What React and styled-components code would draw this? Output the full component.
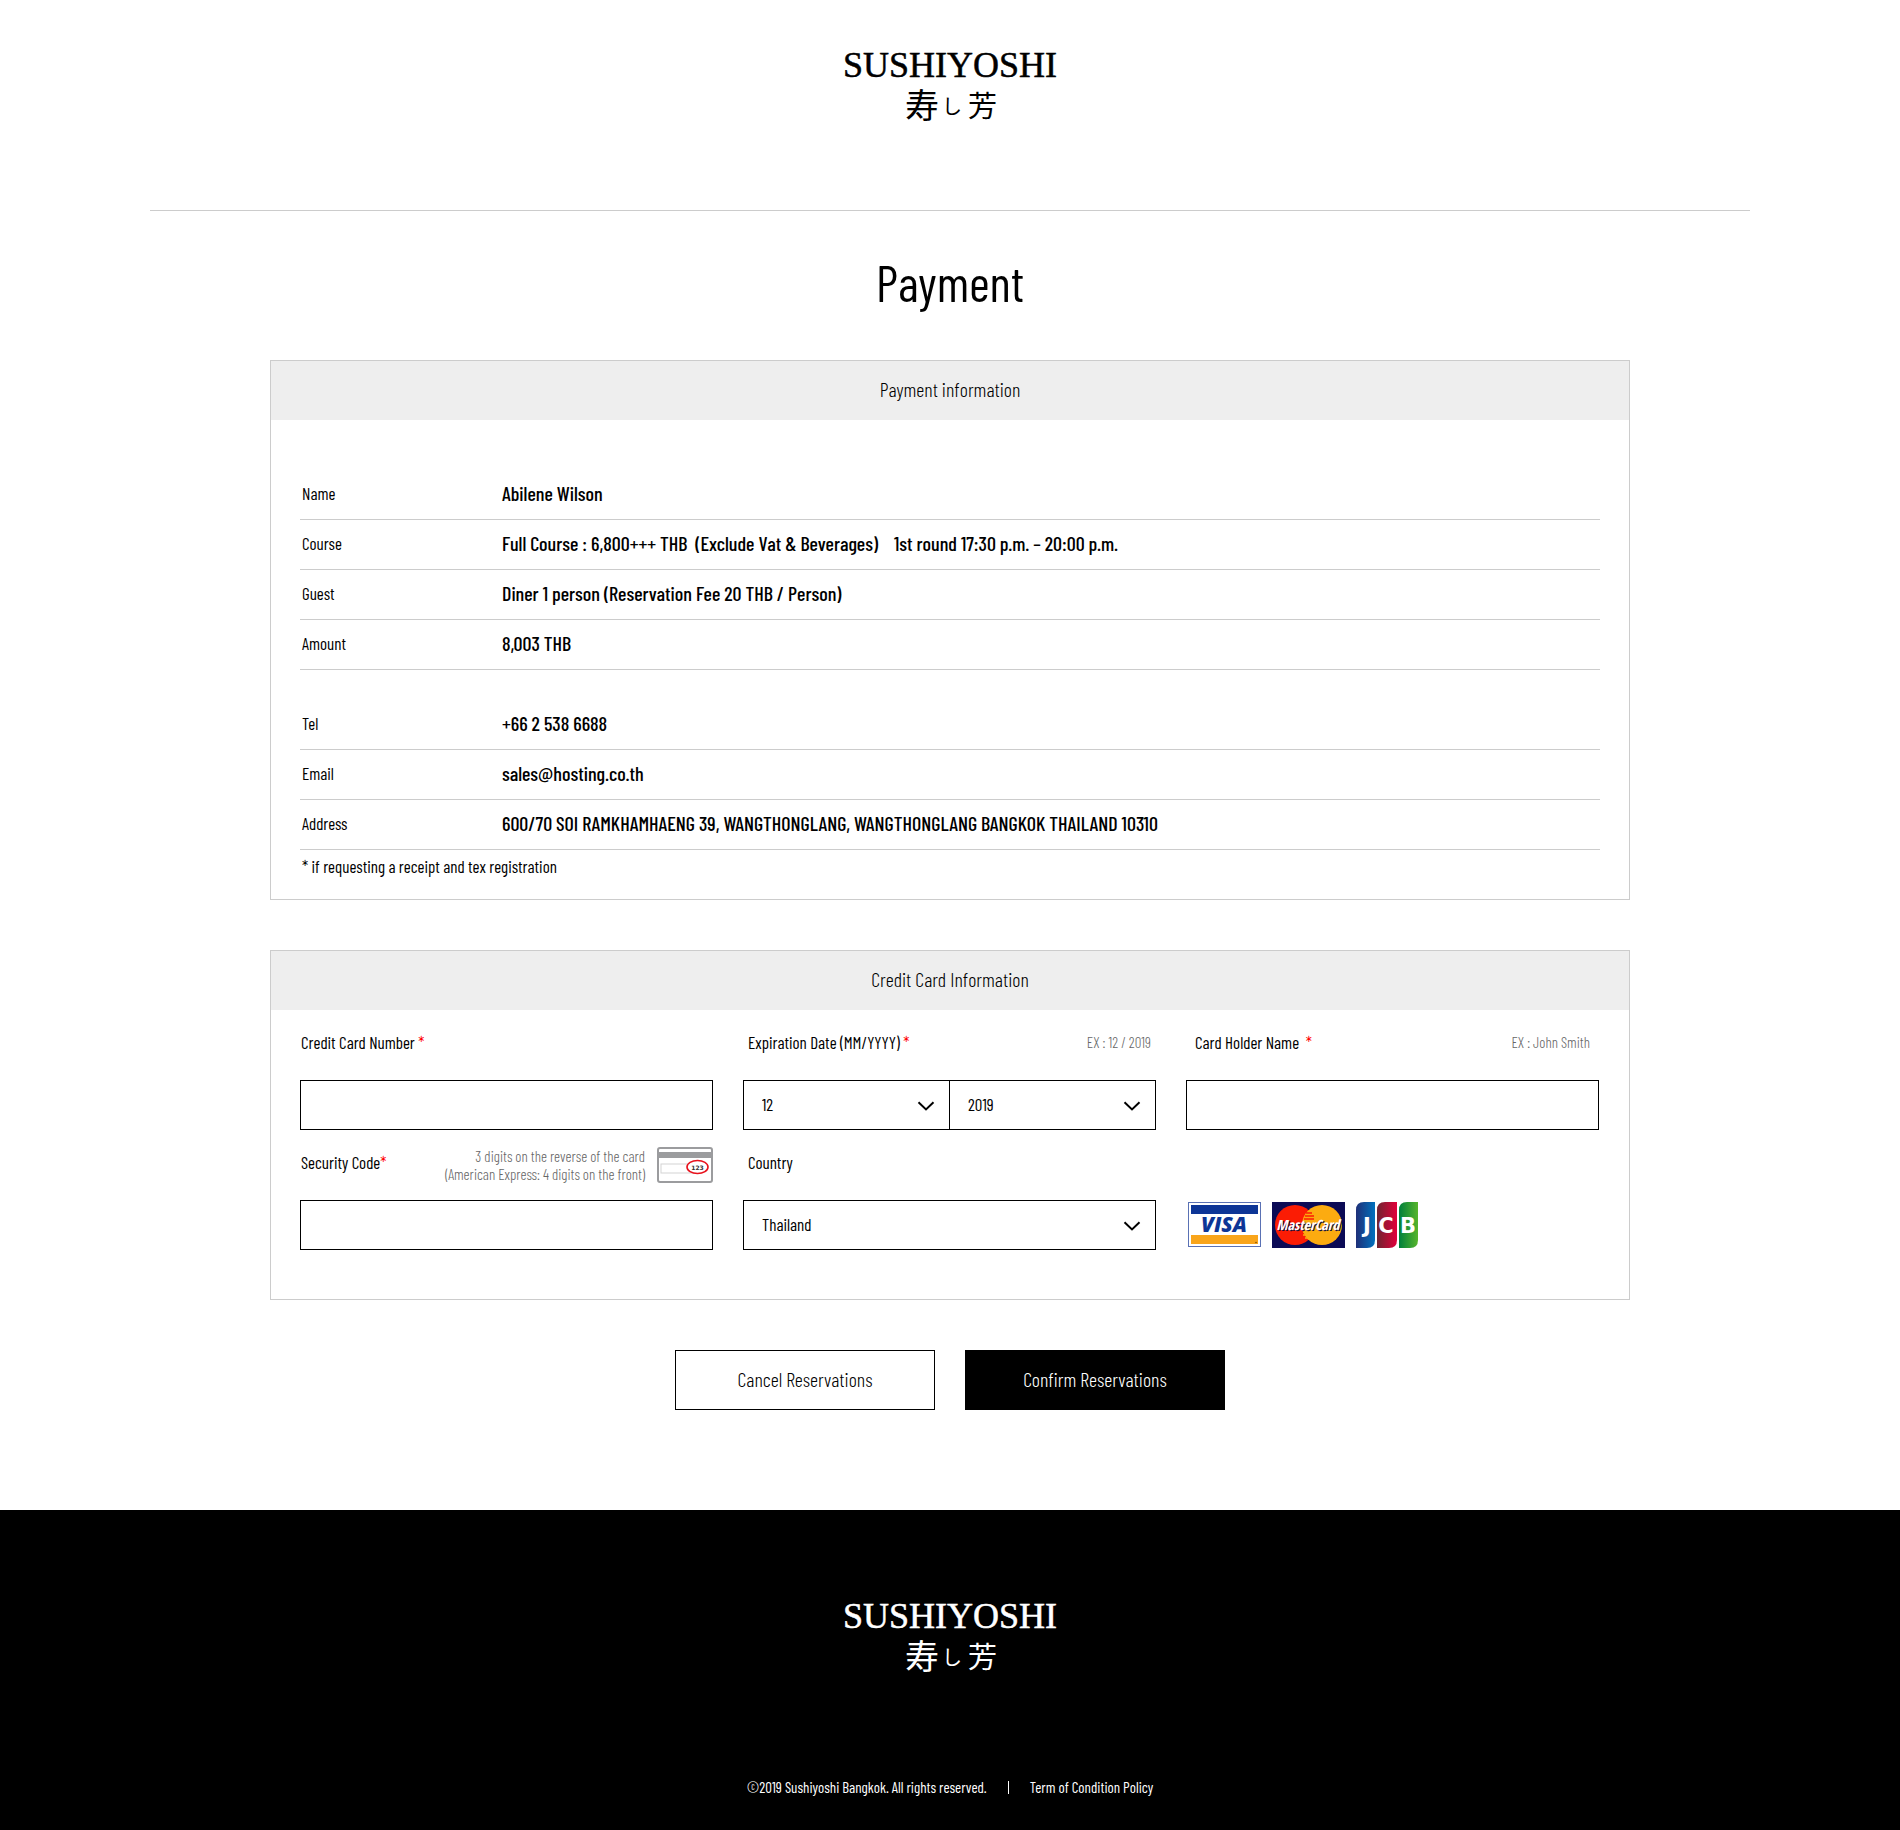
import React from 'react';
import styled, { createGlobalStyle } from 'styled-components';

const customer = [
    { label: 'Name', value: 'Abilene Wilson' },
    { label: 'Course', value: 'Full Course : 6,800+++ THB\u00a0 (Exclude Vat & Beverages)\u00a0\u00a0\u00a0 1st round 17:30 p.m. – 20:00 p.m.' },
    { label: 'Guest', value: 'Diner 1 person (Reservation Fee 20 THB / Person)' },
    { label: 'Amount', value: '8,003 THB' }
];

const contact = [
    { label: 'Tel', value: '+66 2 538 6688' },
    { label: 'Email', value: 'sales@hosting.co.th' },
    { label: 'Address', value: '600/70 SOI RAMKHAMHAENG 39, WANGTHONGLANG, WANGTHONGLANG BANGKOK THAILAND 10310' }
];

const months = ['01', '02', '03', '04', '05', '06', '07', '08', '09', '10', '11', '12'];
const years = ['2019', '2020', '2021', '2022', '2023', '2024'];
const countries = ['Thailand', 'Japan', 'Singapore', 'Malaysia'];

function Logo() {
    return (
        <LogoSvg viewBox="0 0 240 80" width="240" height="80" role="img" aria-label="Sushiyoshi">
            <LogoName x="120" y="32" textAnchor="middle">SUSHIYOSHI</LogoName>
            <LogoKanji x="75" y="73" fontSize="34">寿</LogoKanji>
            <LogoKanji x="112" y="69" fontSize="20">し</LogoKanji>
            <LogoKanji x="138" y="72" fontSize="29">芳</LogoKanji>
        </LogoSvg>
    );
}

function InfoList({ rows }) {
    return (
        <List>
            {rows.map(row => (
                <Row key={row.label}>
                    <Term>{row.label}</Term>
                    <Value>{row.value}</Value>
                </Row>
            ))}
        </List>
    );
}

function Dropdown({ options, ...rest }) {
    return (
        <SelectWrap>
            <Select {...rest}>
                {options.map(option => <option key={option}>{option}</option>)}
            </Select>
            <Chevron viewBox="0 0 18 10" width="18" height="10" aria-hidden="true">
                <path d="M1.5 1.2 L9 8.4 L16.5 1.2" />
            </Chevron>
        </SelectWrap>
    );
}

function CardBackIcon() {
    return (
        <svg width="56" height="36" viewBox="0 0 56 36" aria-hidden="true">
            <rect x="1" y="1" width="54" height="34" rx="2" fill="#fff" stroke="#9b9c9e" strokeWidth="2" />
            <rect x="1" y="5" width="54" height="6" fill="#9b9c9e" />
            <rect x="4" y="17" width="34" height="9" fill="#fff" stroke="#d3d3d3" />
            <ellipse cx="40.500" cy="20" rx="10.500" ry="6.500" fill="#fff" stroke="#e8111c" strokeWidth="1.600" />
            <text x="40.500" y="22.500" textAnchor="middle" fontFamily="'DejaVu Sans', sans-serif" fontWeight="700" fontSize="6" fill="#333">123</text>
        </svg>
    );
}

function VisaIcon() {
    return (
        <svg width="73" height="46" viewBox="0 0 73 46" role="img" aria-label="Visa">
            <rect x="0.500" y="0.500" width="72" height="44" fill="#fff" stroke="#5a71b4" />
            <rect x="3" y="3" width="67" height="9" fill="#0d3596" />
            <rect x="3" y="33" width="67" height="9" fill="#f9a51a" />
            <circle cx="68" cy="40.500" r="0.800" fill="#7a4b00" />
            <text x="36" y="30" textAnchor="middle" fontFamily="'Open Sans', sans-serif" fontStyle="italic" fontWeight="800" fontSize="21" fill="#0d3596">VISA</text>
        </svg>
    );
}

function MasterCardIcon() {
    return (
        <svg width="73" height="46" viewBox="0 0 73 46" role="img" aria-label="MasterCard">
            <rect width="73" height="46" fill="#0b0a55" />
            <circle cx="23" cy="23" r="20" fill="#fb1c04" />
            <circle cx="50" cy="23" r="20" fill="#fcab10" />
            <path d="M34 11 H40 M33 14 H42 M32 17 H42" fill="none" stroke="#fb1c04" strokeWidth="1.600" />
            <path d="M31 30 H40 M31 33 H40 M33 36 H40" fill="none" stroke="#fcab10" strokeWidth="1.600" />
            <text x="37" y="29" textAnchor="middle" fontFamily="'Open Sans Condensed', 'Open Sans', sans-serif" fontStyle="italic" fontWeight="700" fontSize="14" fill="#14103f">MasterCard</text>
            <text x="36" y="28" textAnchor="middle" fontFamily="'Open Sans Condensed', 'Open Sans', sans-serif" fontStyle="italic" fontWeight="700" fontSize="14" fill="#fff">MasterCard</text>
        </svg>
    );
}

function JcbIcon() {
    return (
        <svg width="62" height="46" viewBox="0 0 62 46" role="img" aria-label="JCB">
            <defs>
                <linearGradient id="jcbBlue"><stop offset="0" stopColor="#1f2f78" /><stop offset="1" stopColor="#0071bd" /></linearGradient>
                <linearGradient id="jcbRed"><stop offset="0" stopColor="#6f2430" /><stop offset="1" stopColor="#e2003b" /></linearGradient>
                <linearGradient id="jcbGreen"><stop offset="0" stopColor="#00803c" /><stop offset="1" stopColor="#57b52c" /></linearGradient>
            </defs>
            <path d="M8 0 H19 V38 Q19 46 11 46 H0 V8 Q0 0 8 0 Z" fill="url(#jcbBlue)" />
            <path d="M29 0 H41 V38 Q41 46 33 46 H21 V8 Q21 0 29 0 Z" fill="url(#jcbRed)" />
            <path d="M51 0 H62 V38 Q62 46 54 46 H43 V8 Q43 0 51 0 Z" fill="url(#jcbGreen)" />
            <JcbLetter x="11" y="31">J</JcbLetter>
            <JcbLetter x="30" y="31">C</JcbLetter>
            <JcbLetter x="52" y="31">B</JcbLetter>
        </svg>
    );
}

class App extends React.Component {

    constructor(props) {
        super(props);

        this.state = {
            number: '',
            holder: '',
            code: '',
            month: '12',
            year: '2019',
            country: 'Thailand'
        };

        this.onChange = this.onChange.bind(this);
    }

    onChange(e) {
        this.setState({ [e.target.name]: e.target.value });
    }

    render() {
        const { number, holder, code, month, year, country } = this.state;

        return (
            <React.Fragment>
                <GlobalStyle />
                <Header>
                    <Logo />
                </Header>
                <Main>
                    <Title>Payment</Title>

                    <Card>
                        <CardTitle>Payment information</CardTitle>
                        <InfoBody>
                            <InfoList rows={customer} />
                            <InfoList rows={contact} />
                            <Note>* if requesting a receipt and tex registration</Note>
                        </InfoBody>
                    </Card>

                    <Card>
                        <CardTitle>Credit Card Information</CardTitle>
                        <Fields>
                            <Field>
                                <FieldHead>
                                    <label htmlFor="number">Credit Card Number <Required>*</Required></label>
                                </FieldHead>
                                <Input id="number" name="number" value={number} onChange={this.onChange} />
                            </Field>
                            <Field>
                                <FieldHead $inset="5px">
                                    <label htmlFor="month">Expiration Date (MM/YYYY) <Required>*</Required></label>
                                    <Hint>EX : 12 / 2019</Hint>
                                </FieldHead>
                                <SelectPair>
                                    <Dropdown id="month" name="month" value={month} options={months} onChange={this.onChange} />
                                    <Dropdown aria-label="Expiration year" name="year" value={year} options={years} onChange={this.onChange} />
                                </SelectPair>
                            </Field>
                            <Field>
                                <FieldHead $inset="9px">
                                    <label htmlFor="holder">Card Holder Name&nbsp; <Required>*</Required></label>
                                    <Hint>EX : John Smith</Hint>
                                </FieldHead>
                                <Input id="holder" name="holder" value={holder} onChange={this.onChange} />
                            </Field>
                            <Field>
                                <FieldHead>
                                    <label htmlFor="code">Security Code<Required>*</Required></label>
                                    <CodeHint>
                                        <Hint>3 digits on the reverse of the card<br />(American Express: 4 digits on the front)</Hint>
                                        <CardBackIcon />
                                    </CodeHint>
                                </FieldHead>
                                <Input id="code" name="code" value={code} onChange={this.onChange} />
                            </Field>
                            <Field>
                                <FieldHead $inset="5px">
                                    <label htmlFor="country">Country</label>
                                </FieldHead>
                                <Dropdown id="country" name="country" value={country} options={countries} onChange={this.onChange} />
                            </Field>
                            <Brands>
                                <VisaIcon />
                                <MasterCardIcon />
                                <JcbIcon />
                            </Brands>
                        </Fields>
                    </Card>

                    <Actions>
                        <Button type="button">Cancel Reservations</Button>
                        <Button type="button" $primary>Confirm Reservations</Button>
                    </Actions>
                </Main>
                <Footer>
                    <Logo />
                    <Legal>
                        <span>©2019 Sushiyoshi Bangkok. All rights reserved.</span>
                        <Divider />
                        <a href="#terms">Term of Condition Policy</a>
                    </Legal>
                </Footer>
            </React.Fragment>
        );
    }
}

const GlobalStyle = createGlobalStyle`
    *, *::before, *::after {
        box-sizing: border-box;
    }

    body {
        margin: 0;
        background: #fff;
        color: #000;
        font-family: "Barlow Condensed", "Roboto Condensed", sans-serif;
        font-size: 17px;
        line-height: 20px;
    }

    input, select, button {
        font-family: inherit;
    }
`;

const LogoSvg = styled.svg`
    display: block;
    fill: currentColor;
`;

const LogoName = styled.text`
    font-family: "Liberation Serif", "Times New Roman", serif;
    font-size: 36px;
    stroke: currentColor;
    stroke-width: 0.5;
`;

const LogoKanji = styled.text`
    font-family: "Liberation Serif", "Noto Sans CJK JP", serif;
`;

const JcbLetter = styled.text`
    fill: #fff;
    font-family: "DejaVu Sans", sans-serif;
    font-size: 21px;
    font-weight: 700;
    text-anchor: middle;
`;

const Header = styled.header`
    display: flex;
    justify-content: center;
    width: calc(100% - 300px);
    max-width: 1600px;
    height: 211px;
    margin: 0 auto;
    padding-top: 45px;
    border-bottom: 1px solid #ccc;
`;

const Main = styled.main`
    width: calc(100% - 60px);
    max-width: 1360px;
    margin: 0 auto;
    padding: 41px 0 100px;
`;

const Title = styled.h1`
    margin: 0 0 48px;
    font-size: 50px;
    font-weight: 400;
    line-height: 60px;
    text-align: center;
`;

const Card = styled.section`
    margin-bottom: 50px;
    border: 1px solid #ccc;
`;

const CardTitle = styled.h2`
    margin: 0;
    padding-bottom: 2px;
    background: #eee;
    font-size: 20px;
    font-weight: 300;
    line-height: 57px;
    text-align: center;
`;

const InfoBody = styled.div`
    padding: 50px 29px 16px;
`;

const List = styled.dl`
    margin: 0;

    & + & {
        margin-top: 30px;
    }
`;

const Row = styled.div`
    display: grid;
    grid-template-columns: 200px 1fr;
    align-items: center;
    min-height: 50px;
    padding: 0 2px 3px;
    border-bottom: 1px solid #ccc;
`;

const Term = styled.dt`
    font-size: 17px;
`;

const Value = styled.dd`
    margin: 0;
    font-size: 20px;
    font-weight: 500;
`;

const Note = styled.p`
    margin: 0;
    padding: 0 2px;
    line-height: 33px;
`;

const Fields = styled.div`
    display: grid;
    grid-template-columns: repeat(3, 1fr);
    column-gap: 30px;
    padding: 0 30px 49px 29px;
`;

const Field = styled.div`
    min-width: 0;
`;

const FieldHead = styled.div`
    display: flex;
    align-items: center;
    justify-content: space-between;
    height: 70px;
    padding: 0 ${props => props.$inset || '0'} 6px ${props => props.$inset || '1px'};
`;

const Required = styled.span`
    color: #f00;
`;

const Hint = styled.span`
    color: #666;
    font-size: 15px;
    font-weight: 300;
    line-height: 18px;
    text-align: right;
`;

const CodeHint = styled.div`
    display: flex;
    align-items: center;
    gap: 12px;
    padding-top: 6px;
`;

const Input = styled.input`
    display: block;
    width: 100%;
    height: 50px;
    padding: 0 18px;
    border: 1px solid #000;
    border-radius: 0;
    background: #fff;
    font-size: 17px;
`;

const SelectWrap = styled.div`
    position: relative;
    flex: 1;
`;

const Select = styled.select`
    display: block;
    width: 100%;
    height: 50px;
    padding: 0 40px 2px 18px;
    appearance: none;
    border: 1px solid #000;
    border-radius: 0;
    background: #fff;
    color: #000;
    font-size: 17px;
`;

const SelectPair = styled.div`
    display: flex;

    ${SelectWrap} + ${SelectWrap} {
        margin-left: -1px;
    }
`;

const Chevron = styled.svg`
    position: absolute;
    top: 21px;
    right: 15px;
    fill: none;
    stroke: #000;
    stroke-width: 2;
    pointer-events: none;
`;

const Brands = styled.div`
    display: flex;
    align-items: flex-end;
    gap: 11px;
    padding: 0 2px 2px;
`;

const Actions = styled.div`
    display: flex;
    justify-content: center;
    gap: 30px;
`;

const Button = styled.button`
    width: 260px;
    height: 60px;
    padding: 0 0 2px;
    border: 1px solid #000;
    background: ${props => props.$primary ? '#000' : '#fff'};
    color: ${props => props.$primary ? '#fff' : '#000'};
    font-size: 20px;
    font-weight: 300;
    cursor: pointer;
`;

const Footer = styled.footer`
    display: flex;
    flex-direction: column;
    align-items: center;
    padding: 86px 0 33px;
    background: #000;
    color: #fff;
`;

const Legal = styled.div`
    display: flex;
    align-items: center;
    margin-top: 101px;
    font-size: 15px;

    a {
        color: inherit;
        text-decoration: none;
    }
`;

const Divider = styled.span`
    width: 1px;
    height: 13px;
    margin: 0 21px;
    background: #fff;
`;

export default App;
